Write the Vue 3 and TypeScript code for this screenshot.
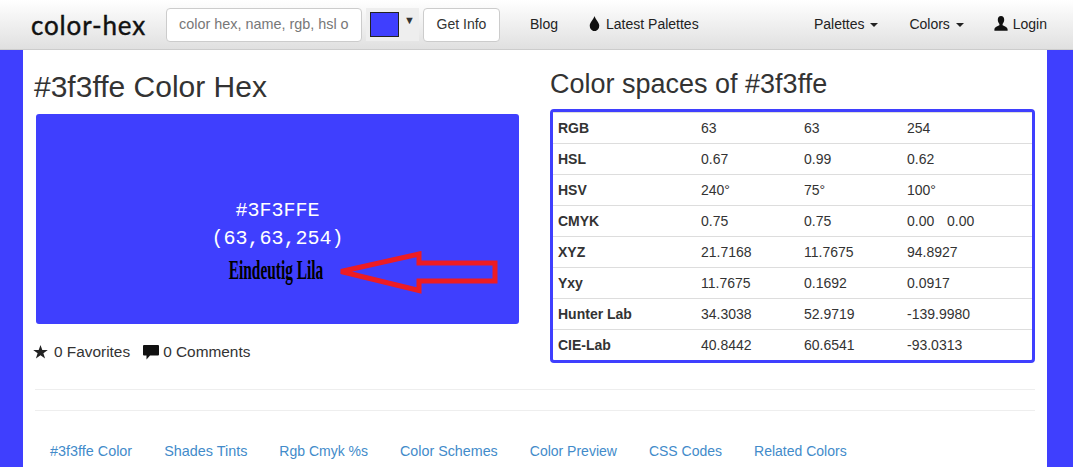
<script setup lang="ts">
const rows: { name: string; v: string[] }[] = [
  { name: 'RGB', v: ['63', '63', '254'] },
  { name: 'HSL', v: ['0.67', '0.99', '0.62'] },
  { name: 'HSV', v: ['240°', '75°', '100°'] },
  { name: 'CMYK', v: ['0.75', '0.75', '0.00\u00a0\u00a0\u00a0\u200a0.00'] },
  { name: 'XYZ', v: ['21.7168', '11.7675', '94.8927'] },
  { name: 'Yxy', v: ['11.7675', '0.1692', '0.0917'] },
  { name: 'Hunter Lab', v: ['34.3038', '52.9719', '-139.9980'] },
  { name: 'CIE-Lab', v: ['40.8442', '60.6541', '-93.0313'] },
]
const tabs = ['#3f3ffe Color', 'Shades Tints', 'Rgb Cmyk %s', 'Color Schemes', 'Color Preview', 'CSS Codes', 'Related Colors']
</script>

<template>
  <div class="page">
    <header class="nav">
      <a class="logo">color-hex</a>
      <form class="search" @submit.prevent>
        <input class="input" placeholder="color hex, name, rgb, hsl or cmyk" />
        <div class="picker"><span class="swatch"></span><span class="tri">▼</span></div>
        <button class="btn">Get Info</button>
      </form>
      <a class="link blog">Blog</a>
      <a class="link latest">
        <svg class="ico" width="11" height="15" viewBox="0 0 12 14" preserveAspectRatio="none"><path d="M6 0C5.4 2.6 .8 6 .8 9.000A5.200 5.200 0 0 0 11.200 9.000C11.200 6 6.600 2.600 6 0Z" fill="#111" /></svg>
        Latest Palettes
      </a>
      <div class="right">
        <a class="link palettes">Palettes <i class="caret"></i></a>
        <a class="link">Colors <i class="caret"></i></a>
        <a class="link login">
          <svg class="ico" width="14" height="15" viewBox="0 0 14 14" preserveAspectRatio="none"><path d="M7 0C4.9 0 3.800 1.500 3.800 3.600C3.800 5.200 4.500 6.600 5.400 7.400V8.600C3.800 9.400 .6 10 .4 12.400V13.800H13.600V12.400C13.400 10 10.200 9.400 8.600 8.600V7.400C9.500 6.600 10.200 5.200 10.200 3.600C10.200 1.500 9.100 0 7 0Z" fill="#111" /></svg>
          Login
        </a>
      </div>
    </header>

    <main class="container">
      <div class="cols">
        <section class="left">
          <h1 class="h1">#3f3ffe Color Hex</h1>
          <div class="preview">
            <div class="mono">#3F3FFE</div>
            <div class="mono">(63,63,254)</div>
            <div class="name">Eindeutig Lila</div>
            <svg class="arrow" width="170" height="50" viewBox="0 0 170 50">
              <path d="M6 20.5L84 3V12H160V30H84V39.500Z" fill="none" stroke="#ed1c24" stroke-width="5" />
            </svg>
          </div>
          <div class="stats">
            <span class="stat">
              <svg width="15" height="14" viewBox="0 0 15 14"><path d="M7.5 0L9.300 5H14.800L10.400 8.200L12.100 13.600L7.5 10.300L2.900 13.600L4.600 8.200L.2 5H5.700Z" fill="#222" /></svg>
              0 Favorites
            </span>
            <span class="stat comments">
              <svg width="16" height="15" viewBox="0 0 16 15"><path d="M1 0H15A1 1 0 0 1 16 1V9.500A1 1 0 0 1 15 10.500H7L3.500 14.500V10.500H1A1 1 0 0 1 0 9.500V1A1 1 0 0 1 1 0Z" fill="#111" /></svg>
              0 Comments
            </span>
          </div>
        </section>
        <section class="right-col">
          <h2 class="h2">Color spaces of #3f3ffe</h2>
          <table class="table">
            <tbody>
              <tr v-for="r in rows" :key="r.name">
                <th class="th">{{ r.name }}</th>
                <td v-for="(c, i) in r.v" :key="i" class="td">{{ c }}</td>
              </tr>
            </tbody>
          </table>
        </section>
      </div>
      <hr class="hr first" />
      <hr class="hr second" />
      <nav class="tabs">
        <a v-for="t in tabs" :key="t" class="tab">{{ t }}</a>
      </nav>
    </main>
  </div>
</template>

<style>
html, body { margin: 0; overflow: hidden; }
</style>

<style scoped>
* { box-sizing: border-box; }
.page {
  height: 467px;
  overflow: hidden;
  background: #3f3ffe;
  font-family: "Liberation Sans", Arial, sans-serif;
  font-size: 14px;
  color: #333;
}
.nav {
  height: 50px;
  display: flex;
  align-items: center;
  padding-left: 31px;
  background: linear-gradient(#fff, #e0e0e0);
  border-bottom: 1px solid #ccc;
}
.logo {
  width: 135px;
  font-family: Lato, sans-serif;
  font-size: 26px;
  font-weight: 400;
  -webkit-text-stroke: 0.4px #111;
  letter-spacing: 0.85px;
  color: #111;
}
.search { display: flex; align-items: center; }
.input {
  width: 196px;
  height: 34px;
  padding: 5px 12px 7px 12px;
  font: 14.4px "Liberation Sans", Arial, sans-serif;
  border: 1px solid #ccc;
  border-radius: 4px;
  background: #fff;
}
.input::placeholder { color: #777; opacity: 1; }
.picker {
  width: 53px;
  height: 33px;
  margin: 0 4px;
  padding: 4px;
  display: flex;
  background: #eee;
}
.swatch {
  width: 30px;
  height: 25px;
  background: #3f3ffe;
  border: 1px solid #222;
}
.tri { margin: 1px 0 0 5px; font-size: 11px; line-height: 14px; color: #333; }
.btn {
  width: 77px;
  height: 34px;
  padding: 0 0 2px;
  font: 14px "Liberation Sans", Arial, sans-serif;
  color: #333;
  background: #fff;
  border: 1px solid #ccc;
  border-radius: 4px;
}
.link { margin-top: -2px; color: #222; white-space: nowrap; }
.blog { margin-left: 30px; }
.latest { margin-left: 31px; display: flex; align-items: center; }
.ico { margin-right: 6px; }
.right { margin-left: auto; margin-right: 26px; display: flex; align-items: center; gap: 30px; }
.palettes { margin-right: 1px; }
.login { display: flex; align-items: center; }
.login .ico { margin-right: 5px; }
.caret {
  display: inline-block;
  margin-left: 2px;
  vertical-align: middle;
  border-top: 4px solid #222;
  border-left: 4px solid transparent;
  border-right: 4px solid transparent;
}
.container {
  width: 1024px;
  height: 417px;
  margin-left: 23px;
  padding: 0 12px;
  background: #fff;
}
.cols { display: flex; height: 328px; }
.left { width: 515px; }
.right-col { width: 485px; }
.h1 {
  margin: 20px 0 11px -1px;
  font-size: 30px;
  line-height: 33px;
  font-weight: 400;
}
.h2 {
  margin: 18px 0 8px;
  font-size: 27px;
  line-height: 33px;
  font-weight: 400;
}
.preview {
  position: relative;
  width: 483px;
  height: 210px;
  margin-left: 1px;
  padding-top: 83px;
  background: #3f3ffe;
  border-radius: 3px;
  text-align: center;
  color: #fff;
}
.mono { font-family: "Liberation Mono", monospace; font-size: 20px; line-height: 28px; }
.name {
  width: 100px;
  margin: 4px 0 0 190px;
  font-family: "Liberation Serif", serif;
  font-size: 27px;
  font-weight: 700;
  line-height: 26px;
  color: #000;
  white-space: nowrap;
  transform: scaleX(0.57);
  transform-origin: 50% 50%;
  display: flex;
  justify-content: center;
}
.arrow { position: absolute; left: 299px; top: 137px; }
.stats { display: flex; gap: 13px; margin: 18px 0 0 -2px; color: #333; }
.stat { display: flex; align-items: center; gap: 6px; font-size: 15.4px; line-height: 20px; }
.comments { gap: 4px; }
.table {
  width: 485px;
  border: 3px solid #3f3ffe;
  border-radius: 4px;
  border-collapse: separate;
  border-spacing: 0;
  table-layout: fixed;
}
.th, .td {
  height: 31px;
  padding: 0 5px;
  text-align: left;
  font-size: 14px;
  border-top: 1px solid #ddd;
}
.th { width: 143px; font-weight: 700; }
.td { width: 103px; }
.td:last-child { width: auto; }
.hr { margin: 0; border: 0; border-top: 1px solid #eee; }
.first { margin-top: 11px; }
.second { margin-top: 20px; }
.tabs { display: flex; margin-top: 20px; }
.tab { padding: 10px 15px; margin-right: 2px; color: #428bca; font-size: 14px; line-height: 20px; white-space: nowrap; }
.tab:nth-child(-n+2) { font-size: 14.4px; }
.tab:nth-child(4) { font-size: 14.3px; }
</style>
